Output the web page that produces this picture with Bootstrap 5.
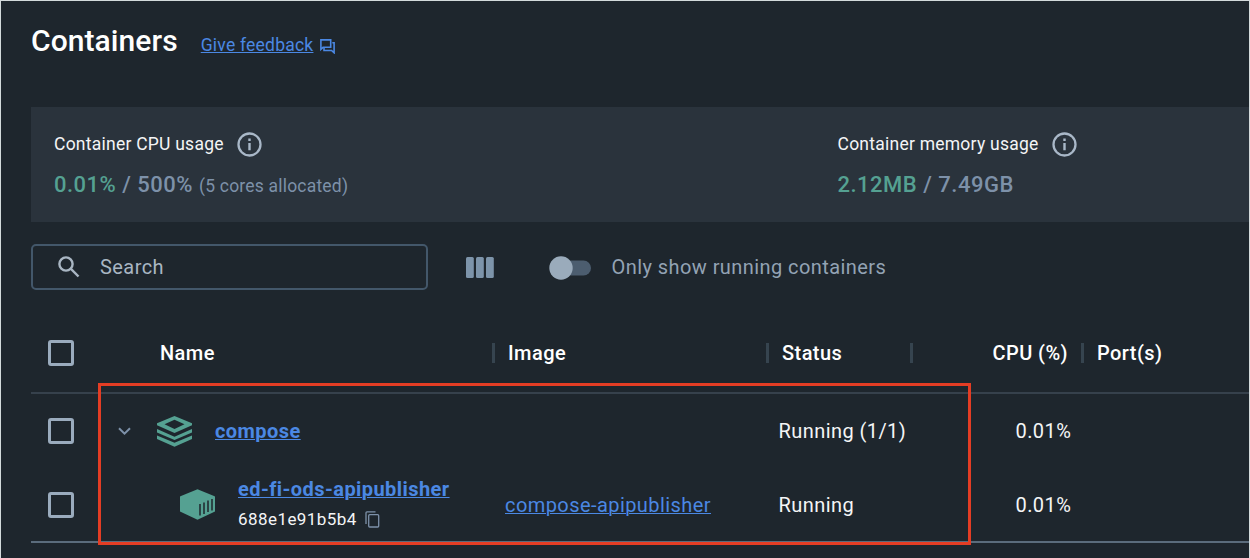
<!DOCTYPE html>
<html lang="en">
<head>
<meta charset="utf-8">
<meta name="viewport" content="width=device-width, initial-scale=1">
<title>Containers</title>
<link href="https://cdn.jsdelivr.net/npm/bootstrap@5.3.0/dist/css/bootstrap.min.css" rel="stylesheet">
<style>
  body { background: #1e262d; font-family: Roboto, "Liberation Sans", sans-serif; color: #f4f5f6; overflow: hidden; }
  .app { height: 558px; border: 1px solid #d3dadb; border-bottom: 0; padding-left: 30px; letter-spacing: .43px; }
  .app a { color: #4b88e3; text-underline-offset: 1px; text-decoration-thickness: 1px; }
  svg { display: block; flex: none; }
  .lh { line-height: 1; white-space: nowrap; }
  .head-bar { height: 106px; }
  .title { font-size: 30px; font-weight: 500; color: #fff; margin: 25px 23px 0 0; letter-spacing: .08px; }
  .feedback { font-size: 17.5px; letter-spacing: .22px; margin-top: 36px; }
  .feedback-icon { margin: 38px 0 0 6.5px; }
  .usage { height: 115px; background: #2a333c; padding: 25px 23px 0; }
  .usage-item { width: 783.5px; }
  .usage-label { font-size: 17.5px; letter-spacing: .24px; }
  .info { margin-left: 13.5px; }
  .usage-value { font-size: 22px; font-weight: 500; color: #7d91a9; margin-top: 17px; letter-spacing: .5px; }
  .used { color: #55a192; }
  .cores { font-size: 17.5px; font-weight: 400; letter-spacing: .2px; }
  .tools { height: 91px; }
  .search-box { width: 397px; height: 46px; margin-bottom: 1px; border: 2px solid #43576a; border-radius: 5px; padding-left: 25px; color: #a9b6c3; font-size: 20px; }
  .search-text { margin: 0 0 0 20px; }
  .columns-icon { margin-left: 37.5px; }
  .toggle { width: 42px; height: 24px; margin-left: 55px; }
  .only { font-size: 20px; color: #93a3b4; margin: -2px 0 0 21px; }
  .grid-row { display: grid; grid-template-columns: 60px 402px 274px 144px 171px 1fr; align-items: center; height: 74px; font-size: 20px; }
  .grid-head { height: 81px; border-bottom: 2px solid #36414c; font-weight: 500; color: #fff; }
  .grid-last { height: 75px; border-bottom: 2px solid #5b6c7c; }
  .tick { width: 26px; height: 26px; border: 3px solid #9aabbd; border-radius: 3px; margin-left: 17px; }
  .split { border-left: 3px solid #36444f; height: 20px; margin-left: -1px; padding-left: 13px; }
  .name-head { padding-left: 69px; }
  .cpu-head { padding-right: 14px; }
  .group-name { padding-left: 27px; }
  .child-name { padding-left: 89px; }
  .icon-gap { margin-left: 26px; }
  .text-gap { margin-left: 23px; }
  .child-text { margin-bottom: 2px; }
  .cell { padding-left: 12px; }
  .status { padding-left: 11.5px; }
  .cpu { padding-left: 104.5px; }
  .short-id { font-size: 17px; margin-top: 12px; }
  .callout { position: absolute; left: 98px; top: 383px; width: 873px; height: 162px; border: 3px solid #e43d24; }
</style>
</head>
<body>
<main class="app">
  <header class="head-bar d-flex align-items-start">
    <h1 class="title lh">Containers</h1>
    <a href="#" class="feedback lh">Give feedback</a>
    <svg class="feedback-icon" width="15" height="15" viewBox="0 0 15 15" fill="none" stroke="#4b88e3" stroke-width="1.600"><path d="M.9 .9h9.800v7.400H3L.9 10.300z"/><path d="M12.300 3.800H14.100v10l-2.500-2.300H4V9"/></svg>
  </header>

  <section class="usage d-flex">
    <div class="usage-item">
      <div class="d-flex align-items-center">
        <span class="usage-label lh">Container CPU usage</span>
        <svg class="info" width="25" height="25" viewBox="0 0 25 25"><circle cx="12.500" cy="12.500" r="11" fill="none" stroke="#a9b8c8" stroke-width="2.300"/><path d="M11.300 6.500h2.400v2.400h-2.400zM11.300 11h2.400v7.300h-2.400z" fill="#a9b8c8"/></svg>
      </div>
      <div class="usage-value lh"><span class="used">0.01%</span> / 500% <span class="cores">(5 cores allocated)</span></div>
    </div>
    <div>
      <div class="d-flex align-items-center">
        <span class="usage-label lh">Container memory usage</span>
        <svg class="info" width="25" height="25" viewBox="0 0 25 25"><circle cx="12.500" cy="12.500" r="11" fill="none" stroke="#a9b8c8" stroke-width="2.300"/><path d="M11.300 6.500h2.400v2.400h-2.400zM11.300 11h2.400v7.300h-2.400z" fill="#a9b8c8"/></svg>
      </div>
      <div class="usage-value lh"><span class="used">2.12MB</span> / 7.49GB</div>
    </div>
  </section>

  <section class="tools d-flex align-items-center">
    <div class="search-box d-flex align-items-center lh">
      <svg width="22" height="22" viewBox="0 0 22 22" fill="none" stroke="#a9b6c3" stroke-width="2.400"><circle cx="8" cy="8" r="6.600"/><path d="M12.700 12.700l7.800 7.800"/></svg>
      <span class="search-text">Search</span>
    </div>
    <svg class="columns-icon" width="28" height="21" viewBox="0 0 28 21" fill="#7d94aa"><rect width="7.800" height="21" rx="1.500"/><rect x="10" width="7.800" height="21" rx="1.500"/><rect x="20" width="7.800" height="21" rx="1.500"/></svg>
    <svg class="toggle" viewBox="0 0 42 24"><rect x="8" y="4.500" width="34" height="15" rx="7.500" fill="#4c5d6f"/><circle cx="12" cy="12" r="11.700" fill="#9aabbb"/></svg>
    <span class="only lh">Only show running containers</span>
  </section>

  <section>
    <div class="grid-row grid-head lh">
      <div class="tick"></div>
      <div class="name-head">Name</div>
      <div class="split">Image</div>
      <div class="split">Status</div>
      <div class="cpu-head d-flex justify-content-between"><div class="split"></div><span>CPU (%)</span></div>
      <div class="split">Port(s)</div>
    </div>
    <div class="grid-row lh">
      <div class="tick"></div>
      <div class="group-name d-flex align-items-center">
        <svg width="13" height="9" viewBox="0 0 13 9" fill="none" stroke="#7d91a9" stroke-width="2"><path d="M1 1.200l5.500 5.500L12 1.200"/></svg>
        <svg class="icon-gap" width="35" height="31" viewBox="0 0 35 31" fill="#55a192"><path fill-rule="evenodd" d="M17.500 0L35 7.300v2L17.500 17 0 9.300v-2zM17.500 3.800L7.500 8.300l10 4.700 10-4.700z"/><path d="M0 13l17.500 7.700L35 13v3.500L17.500 24.100 0 16.500zM0 19.500l17.500 7.200L35 19.500v3.400L17.500 30.700 0 22.900z"/></svg>
        <a href="#" class="fw-bold text-gap">compose</a>
      </div>
      <div></div>
      <div class="status">Running (1/1)</div>
      <div class="cpu">0.01%</div>
    </div>
    <div class="grid-row grid-last lh">
      <div class="tick"></div>
      <div class="child-name d-flex align-items-center">
        <svg width="35" height="31" viewBox="0 0 35 31"><path d="M17.500 .2L34.600 7.300q.4 .2 .4 .7v14.500L17.500 30.700 0 22.500V8q0-.5 .4-.7z" fill="#55a192"/><path d="M20 15v11.500M24 13.500v11.500M28 11.500v11.500M32 10v11.500" stroke="#1e262d" stroke-width="1.500"/></svg>
        <div class="text-gap child-text">
          <a href="#" class="fw-bold d-block">ed-fi-ods-apipublisher</a>
          <div class="d-flex align-items-center short-id">688e1e91b5b4
            <svg class="ms-2" width="15" height="17" viewBox="0 0 15 17" fill="none" stroke="#7d91a9" stroke-width="1.300"><rect x="3.700" y="3.700" width="10" height="12.300" rx="1"/><path d="M1 13V1.800Q1 .8 2 .8h8.500"/></svg></div>
        </div>
      </div>
      <div class="cell"><a href="#">compose-apipublisher</a></div>
      <div class="status">Running</div>
      <div class="cpu">0.01%</div>
    </div>
  </section>
</main>
<div class="callout"></div>
<script src="https://cdn.jsdelivr.net/npm/bootstrap@5.3.0/dist/js/bootstrap.bundle.min.js"></script>
</body>
</html>
